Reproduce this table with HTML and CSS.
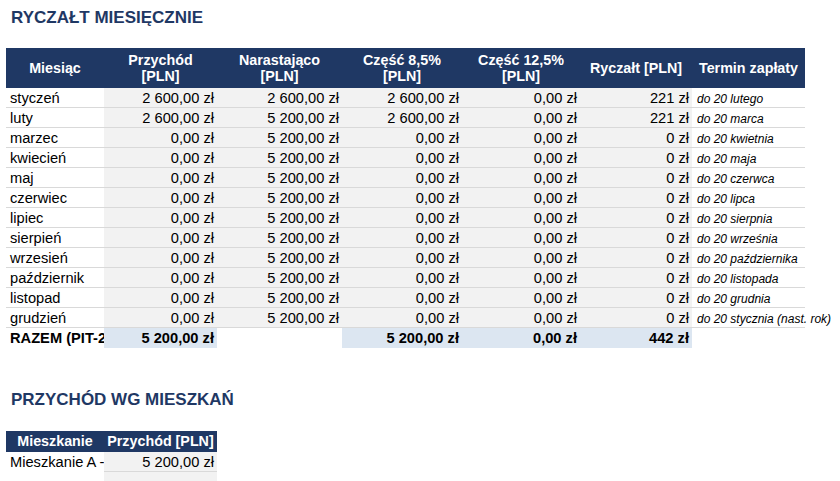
FILE: index.html
```html
<!DOCTYPE html>
<html lang="pl">
<head>
<meta charset="utf-8">
<title>Ryczałt miesięcznie</title>
<link rel="stylesheet" href="styles.css">
</head>
<body>
<main class="sheet">
  <section class="block block-monthly">
    <h2 class="title">RYCZAŁT MIESIĘCZNIE</h2>
    <div class="grid grid-monthly">
      <div class="hd">Miesiąc</div>
      <div class="hd">Przychód<br>[PLN]</div>
      <div class="hd">Narastająco<br>[PLN]</div>
      <div class="hd">Część 8,5%<br>[PLN]</div>
      <div class="hd">Część 12,5%<br>[PLN]</div>
      <div class="hd">Ryczałt [PLN]</div>
      <div class="hd">Termin zapłaty</div>

      <div class="c txt">styczeń</div><div class="c num">2 600,00 zł</div><div class="c num">2 600,00 zł</div><div class="c num">2 600,00 zł</div><div class="c num">0,00 zł</div><div class="c num">221 zł</div><div class="c due">do 20 lutego</div>
      <div class="c txt">luty</div><div class="c num">2 600,00 zł</div><div class="c num">5 200,00 zł</div><div class="c num">2 600,00 zł</div><div class="c num">0,00 zł</div><div class="c num">221 zł</div><div class="c due">do 20 marca</div>
      <div class="c txt">marzec</div><div class="c num">0,00 zł</div><div class="c num">5 200,00 zł</div><div class="c num">0,00 zł</div><div class="c num">0,00 zł</div><div class="c num">0 zł</div><div class="c due">do 20 kwietnia</div>
      <div class="c txt">kwiecień</div><div class="c num">0,00 zł</div><div class="c num">5 200,00 zł</div><div class="c num">0,00 zł</div><div class="c num">0,00 zł</div><div class="c num">0 zł</div><div class="c due">do 20 maja</div>
      <div class="c txt">maj</div><div class="c num">0,00 zł</div><div class="c num">5 200,00 zł</div><div class="c num">0,00 zł</div><div class="c num">0,00 zł</div><div class="c num">0 zł</div><div class="c due">do 20 czerwca</div>
      <div class="c txt">czerwiec</div><div class="c num">0,00 zł</div><div class="c num">5 200,00 zł</div><div class="c num">0,00 zł</div><div class="c num">0,00 zł</div><div class="c num">0 zł</div><div class="c due">do 20 lipca</div>
      <div class="c txt">lipiec</div><div class="c num">0,00 zł</div><div class="c num">5 200,00 zł</div><div class="c num">0,00 zł</div><div class="c num">0,00 zł</div><div class="c num">0 zł</div><div class="c due">do 20 sierpnia</div>
      <div class="c txt">sierpień</div><div class="c num">0,00 zł</div><div class="c num">5 200,00 zł</div><div class="c num">0,00 zł</div><div class="c num">0,00 zł</div><div class="c num">0 zł</div><div class="c due">do 20 września</div>
      <div class="c txt">wrzesień</div><div class="c num">0,00 zł</div><div class="c num">5 200,00 zł</div><div class="c num">0,00 zł</div><div class="c num">0,00 zł</div><div class="c num">0 zł</div><div class="c due">do 20 października</div>
      <div class="c txt">październik</div><div class="c num">0,00 zł</div><div class="c num">5 200,00 zł</div><div class="c num">0,00 zł</div><div class="c num">0,00 zł</div><div class="c num">0 zł</div><div class="c due">do 20 listopada</div>
      <div class="c txt">listopad</div><div class="c num">0,00 zł</div><div class="c num">5 200,00 zł</div><div class="c num">0,00 zł</div><div class="c num">0,00 zł</div><div class="c num">0 zł</div><div class="c due">do 20 grudnia</div>
      <div class="c txt">grudzień</div><div class="c num">0,00 zł</div><div class="c num">5 200,00 zł</div><div class="c num">0,00 zł</div><div class="c num">0,00 zł</div><div class="c num">0 zł</div><div class="c due">do 20 stycznia (nast. rok)</div>

      <div class="c tot txt">RAZEM (PIT-28)</div><div class="c tot sum">5 200,00 zł</div><div class="c tot"></div><div class="c tot sum">5 200,00 zł</div><div class="c tot sum">0,00 zł</div><div class="c tot sum">442 zł</div><div class="c tot"></div>
    </div>
  </section>

  <section class="block block-apt">
    <h2 class="title">PRZYCHÓD WG MIESZKAŃ</h2>
    <div class="grid grid-apt">
      <div class="hd hd-single">Mieszkanie</div>
      <div class="hd hd-single">Przychód [PLN]</div>

      <div class="c txt plain">Mieszkanie A - ul. Słoneczna 5</div><div class="c num">5 200,00 zł</div>
      <div class="c txt plain"></div><div class="c num"></div>
    </div>
  </section>
</main>
</body>
</html>
```

FILE: styles.css
```css
html, body {
  margin: 0;
  padding: 0;
  background: #ffffff;
}

body {
  font-family: "Liberation Sans", Arial, sans-serif;
  color: #000000;
}

.sheet {
  width: 840px;
}

.title {
  margin: 0;
  padding: 8px 0 0 11px;
  font-size: 17px;
  line-height: 20px;
  font-weight: bold;
  color: #1f3864;
}

.block-monthly .title {
  margin-bottom: 20px;
}

.block-apt {
  margin-top: 34px;
}

.block-apt .title {
  margin-bottom: 21px;
}

.grid {
  display: grid;
  margin-left: 6px;
}

.grid-monthly {
  grid-template-columns: 98px 113px 125px 120px 118px 112px 113px;
}

.grid-apt {
  grid-template-columns: 98px 113px;
}

.hd {
  height: 40px;
  display: flex;
  align-items: center;
  justify-content: center;
  background: #1f3864;
  color: #ffffff;
  font-weight: bold;
  font-size: 14.3px;
  line-height: 16.5px;
  text-align: center;
  white-space: nowrap;
  overflow: hidden;
}

.hd-single {
  height: 21px;
  line-height: 21px;
}

.c {
  height: 20px;
  box-sizing: border-box;
  padding: 2px 3px 0 4px;
  border-bottom: 1px solid #d9d9d9;
  font-size: 14.67px;
  line-height: 17px;
  white-space: nowrap;
  overflow: hidden;
}

.num {
  background: #f2f2f2;
  text-align: right;
}

.due {
  font-style: italic;
  font-size: 12px;
  line-height: 15px;
  padding-top: 4px;
  padding-left: 5px;
  overflow: visible;
}

.tot {
  font-weight: bold;
  border-bottom: none;
}

.sum {
  background: #dce6f1;
  text-align: right;
}

.plain {
  border-bottom: none;
}
```
